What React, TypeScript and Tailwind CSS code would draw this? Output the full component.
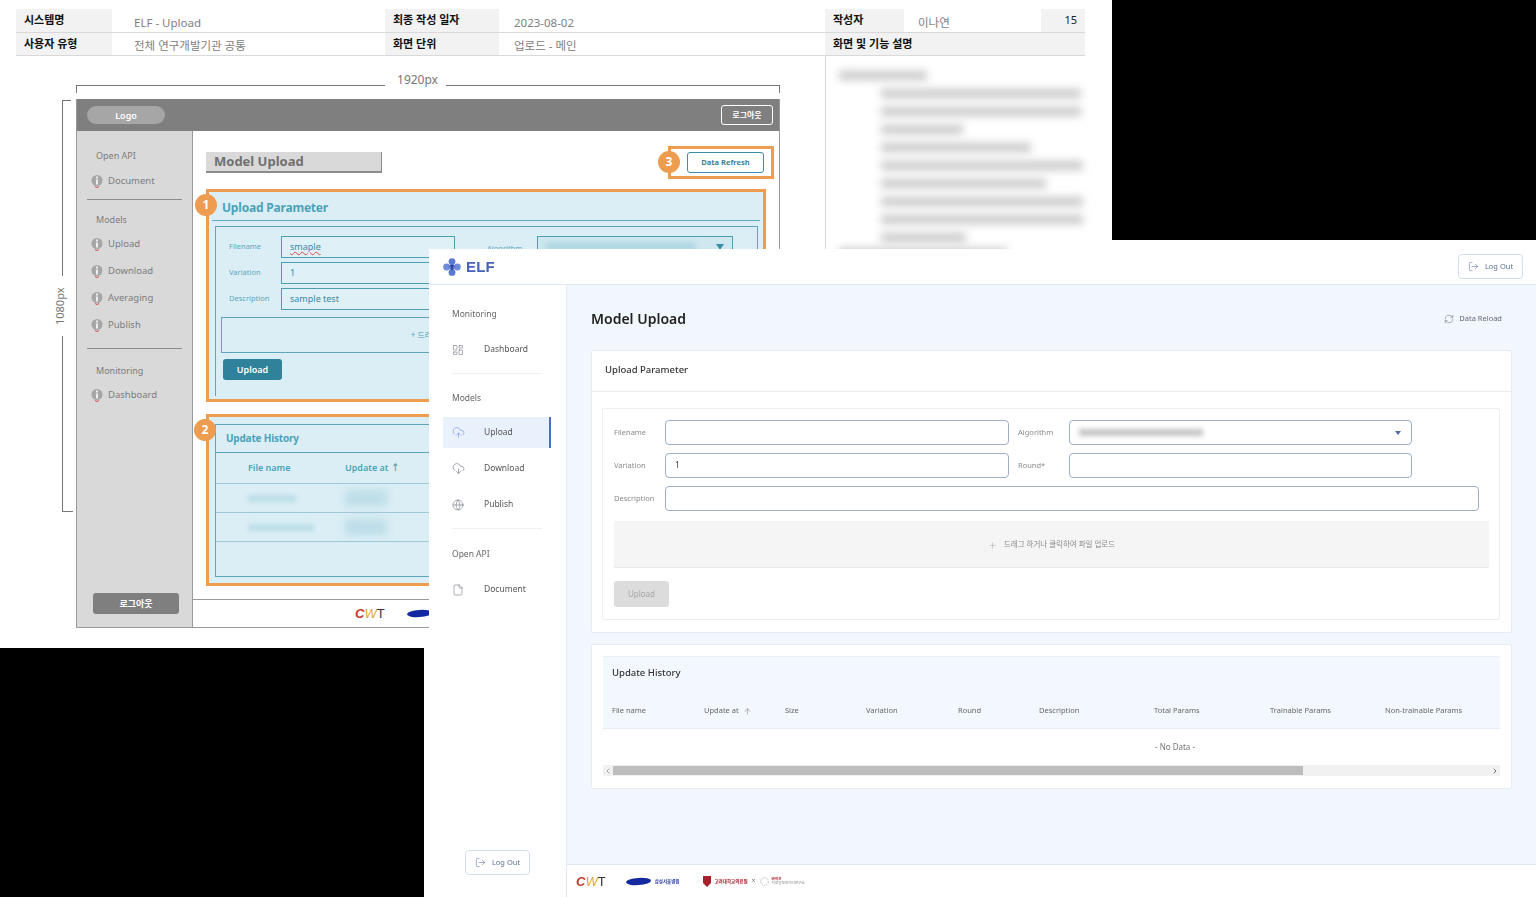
import React from "react";
import {
  ArrowUp,
  ChevronLeft,
  ChevronRight,
  CloudDownload,
  CloudUpload,
  File,
  Globe,
  LayoutDashboard,
  LogOut,
  Plus,
  RefreshCw,
} from "lucide-react";

const font = "font-['Noto_Sans','Noto_Sans_CJK_KR',sans-serif]";

// ---------- spec sheet (back window) ----------

const SpecLabel = ({ w, children }: { w: string; children: React.ReactNode }) => (
  <div className={`${w} shrink-0 bg-[#f2f2f2] pl-2 text-[11px] font-bold text-[#111] flex items-center`}>
    {children}
  </div>
);

const SpecValue = ({ w, pl, children }: { w: string; pl: string; children?: React.ReactNode }) => (
  <div className={`${w} ${pl} shrink-0 pt-[4px] text-[11.5px] text-[#808080] flex items-center`}>
    {children}
  </div>
);

const WireInfo = () => (
  <svg width="12" height="15" viewBox="0 0 12 15" className="shrink-0">
    <circle cx="6" cy="6.5" r="5.5" fill="#a6a6a6" />
    <rect x="5" y="2.5" width="2" height="2" fill="#eee" />
    <rect x="5" y="5.5" width="2" height="5" fill="#eee" />
    <path d="M4 12.5 Q6 14.5 8 12.5" stroke="#d24a4a" strokeWidth="1" fill="none" />
  </svg>
);

const WireItem = ({ label, h }: { label: string; h: string }) => (
  <div className={`${h} flex items-center gap-[5px] pl-[14px] text-[9.5px] text-[#7c7c7c]`}>
    <WireInfo />
    {label}
  </div>
);

const WireSection = ({ label }: { label: string }) => (
  <div className="h-[14px] pl-[19px] text-[9px] leading-[14px] text-[#7c7c7c]">{label}</div>
);

const WireField = ({
  label,
  value,
  squiggle,
  children,
}: {
  label: string;
  value: string;
  squiggle?: boolean;
  children?: React.ReactNode;
}) => (
  <div className="flex h-[22px] items-center">
    <div className="w-[65px] shrink-0 pl-[13px] text-[7.5px] text-[#5aa6bd]">{label}</div>
    <div className="flex h-full w-[174px] shrink-0 items-center border border-[#4d9db3] bg-[#dff0f6] pl-2 text-[9px] text-[#3a8aa5]">
      {squiggle ? <span className="underline decoration-wavy decoration-[#d24a4a]">{value}</span> : value}
    </div>
    {children}
  </div>
);

const Badge = ({ n, className }: { n: number; className: string }) => (
  <div
    className={`absolute flex size-[22px] items-center justify-center rounded-full bg-[#ed9c50] text-[12px] font-bold text-white ${className}`}
  >
    {n}
  </div>
);

const blurLines = [
  "w-[200px]",
  "w-[200px]",
  "w-[82px]",
  "w-[150px]",
  "w-[202px]",
  "w-[165px]",
  "w-[202px]",
  "w-[202px]",
  "w-[85px]",
];

const BackWindow = () => (
  <div className="absolute left-0 top-0 flex h-[648px] w-[1112px] flex-col bg-white pl-4 pt-[9px]">
    <div className="flex h-[24px] w-[1069px] border-b border-[#d9d9d9]">
      <SpecLabel w="w-[96px]">시스템명</SpecLabel>
      <SpecValue w="w-[273px]" pl="pl-[22px]">ELF - Upload</SpecValue>
      <SpecLabel w="w-[114px]">최종 작성 일자</SpecLabel>
      <SpecValue w="w-[326px]" pl="pl-[15px]">2023-08-02</SpecValue>
      <SpecLabel w="w-[79px]">작성자</SpecLabel>
      <SpecValue w="w-[137px]" pl="pl-[14px]">이나연</SpecValue>
      <div className="flex flex-1 items-center justify-end bg-[#f2f2f2] pr-2 text-[11px] text-[#222]">15</div>
    </div>
    <div className="flex h-[23px] w-[1069px] border-b border-[#d9d9d9]">
      <SpecLabel w="w-[96px]">사용자 유형</SpecLabel>
      <SpecValue w="w-[273px]" pl="pl-[22px]">전체 연구개발기관 공통</SpecValue>
      <SpecLabel w="w-[114px]">화면 단위</SpecLabel>
      <SpecValue w="w-[326px]" pl="pl-[15px]">업로드 - 메인</SpecValue>
      <SpecLabel w="w-[260px]">화면 및 기능 설명</SpecLabel>
    </div>

    <div className="flex flex-1">
      {/* wireframe column */}
      <div className="relative w-[809px] shrink-0 pl-[60px] pt-[43px]">
        {/* dimension lines */}
        <div className="absolute left-[60px] top-[29px] flex h-[8px] w-[704px] items-start">
          <div className="h-full w-[309px] border-l border-t border-[#777]" />
          <div className="-mt-[14px] w-[61px] pl-[4px] text-center text-[12px] text-[#777]">1920px</div>
          <div className="h-full flex-1 border-r border-t border-[#777]" />
        </div>
        <div className="absolute left-[42px] top-[44px] flex h-[412px] w-[16px] flex-col items-start">
          <div className="ml-[4px] h-[176px] w-[9px] border-l border-t border-[#777]" />
          <div className="-ml-[2px] flex h-[60px] w-[8px] items-center justify-center">
            <span className="-rotate-90 whitespace-nowrap text-[11px] text-[#777]">1080px</span>
          </div>
          <div className="ml-[4px] w-[11px] flex-1 border-b border-l border-[#777]" />
        </div>

        <div className="flex h-[529px] w-[704px] flex-col border-b border-l border-r border-[#9a9a9a]">
          <div className="flex h-[32px] shrink-0 items-center justify-between bg-[#7f7f7f] pl-[10px] pr-[6px]">
            <div className="flex h-[18px] w-[78px] items-center justify-center rounded-full bg-[#a6a6a6] pt-[1px] text-[9px] font-semibold text-white">
              Logo
            </div>
            <div className="flex h-[20px] w-[52px] items-center justify-center rounded-[3px] border border-white text-[8px] font-semibold text-white">
              로그아웃
            </div>
          </div>
          <div className="flex min-h-0 flex-1">
            <div className="flex w-[116px] shrink-0 flex-col border-r border-[#9a9a9a] bg-[#d9d9d9] pt-[18px]">
              <WireSection label="Open API" />
              <div className="mt-[5px]" />
              <WireItem label="Document" h="h-[26px]" />
              <div className="mx-[10px] mt-[5px] border-t border-[#8c8c8c]" />
              <div className="mt-[13px]" />
              <WireSection label="Models" />
              <div className="mt-[4px]" />
              <WireItem label="Upload" h="h-[27px]" />
              <WireItem label="Download" h="h-[27px]" />
              <WireItem label="Averaging" h="h-[27px]" />
              <WireItem label="Publish" h="h-[27px]" />
              <div className="mx-[10px] mt-[9px] border-t border-[#8c8c8c]" />
              <div className="mt-[15px]" />
              <WireSection label="Monitoring" />
              <div className="mt-[4px]" />
              <WireItem label="Dashboard" h="h-[26px]" />
              <div className="mb-[13px] ml-[16px] mr-[13px] mt-auto flex h-[21px] items-center justify-center rounded-[3px] bg-[#7f7f7f] text-[9px] font-semibold text-white">
                로그아웃
              </div>
            </div>
            <div className="flex min-w-0 flex-1 flex-col">
              <div className="relative min-h-0 flex-1 pl-[13px] pt-[21px]">
                <div className="flex h-[21px] w-[176px] items-center border-b-2 border-r border-[#8c8c8c] bg-[#d9d9d9] pl-2 text-[13px] font-bold text-[#707070]">
                  Model Upload
                </div>
                {/* data refresh callout */}
                <div className="absolute right-[5px] top-[15px] flex h-[33px] w-[106px] items-center justify-end border-[3px] border-[#ed9c50] pr-[7px]">
                  <div className="flex h-[21px] w-[77px] items-center justify-center rounded-[3px] border border-[#3d8da5] text-[7.5px] font-bold text-[#3d7f96]">
                    Data Refresh
                  </div>
                </div>
                <Badge n={3} className="right-[99px] top-[20px]" />

                {/* upload parameter */}
                <div className="relative mt-[16px] h-[213px] w-[560px] border-[3px] border-[#ed9c50] bg-[#dbeef5] px-[3px] pt-[4px]">
                  <div className="h-[25px] border-b border-[#5fb0c4] pl-[10px] text-[12px] font-bold leading-[24px] tracking-[-0.2px] text-[#4aa3b8]">
                    Upload Parameter
                  </div>
                  <div className="ml-[3px] mr-[2px] mt-[5px] h-[170px] border-l border-r border-t border-[#5fa5ba] pt-[9px]">
                    <div className="flex flex-col gap-[4px]">
                      <WireField label="Filename" value="smaple" squiggle>
                        <div className="w-[32px] shrink-0" />
                        <div className="w-[50px] shrink-0 pt-[4px] text-[7.5px] text-[#5aa6bd]">Algorithm</div>
                        <div className="flex h-full w-[196px] shrink-0 items-center justify-between overflow-hidden border border-[#4d9db3] bg-[#cfe8f0] px-[8px]">
                          <div className="h-[8px] w-[150px] bg-[#a9d3e0] blur-[3px]" />
                          <div className="size-0 border-x-[4px] border-t-[6px] border-x-transparent border-t-[#3d8da5]" />
                        </div>
                      </WireField>
                      <WireField label="Variation" value="1" />
                      <WireField label="Description" value="sample test" />
                    </div>
                    <div className="ml-[5px] mr-[3px] mt-[7px] flex h-[36px] items-center justify-center border border-[#5fa5ba] pr-[28px] text-[8px] text-[#4aa3b8]">
                      + 드래그 하거나 클릭하여 파일 업로드
                    </div>
                    <div className="ml-[7px] mt-[6px] flex h-[21px] w-[59px] items-center justify-center rounded-[3px] bg-[#2f8299] text-[9px] font-semibold text-white">
                      Upload
                    </div>
                  </div>
                </div>
                <Badge n={1} className="left-[2px] top-[63px]" />

                {/* update history */}
                <div className="relative mt-[12px] h-[172px] w-[560px] border-[3px] border-[#ed9c50] bg-[#dbeef5] pl-[6px] pt-[7px]">
                  <div className="h-[153px] border-b border-l border-t border-[#5fa5ba]">
                    <div className="h-[28px] border-b border-[#5fa5ba] pl-[10px] text-[10px] font-bold leading-[27px] tracking-[-0.2px] text-[#4aa3b8]">
                      Update History
                    </div>
                    <div className="flex h-[31px] items-center border-b border-[#9cc9d6] pl-[32px] text-[9px] font-semibold text-[#4aa3b8]">
                      <div className="w-[97px]">File name</div>
                      <div>Update at ↑</div>
                    </div>
                    <div className="flex h-[29px] items-center border-b border-[#9cc9d6] pl-[32px]">
                      <div className="w-[97px]">
                        <div className="h-[7px] w-[48px] bg-[#bcdde8] blur-[2px]" />
                      </div>
                      <div className="h-[16px] w-[42px] bg-[#bcdde8] blur-[4px]" />
                    </div>
                    <div className="flex h-[29px] items-center border-b border-[#9cc9d6] pl-[32px]">
                      <div className="w-[97px]">
                        <div className="h-[7px] w-[66px] bg-[#bcdde8] blur-[2px]" />
                      </div>
                      <div className="h-[16px] w-[42px] bg-[#bcdde8] blur-[4px]" />
                    </div>
                  </div>
                </div>
                <Badge n={2} className="left-[1px] top-[288px]" />
              </div>
              <div className="flex h-[28px] shrink-0 items-center gap-[22px] border-t border-[#9a9a9a] pl-[162px]">
                <CwtMark />
                <SamsungMark />
              </div>
            </div>
          </div>
        </div>
      </div>

      {/* blurred description */}
      <div className="flex-1 border-l border-[#d9d9d9] pl-[13px] pt-[15px]">
        <div className="h-[9px] w-[88px] bg-[#c8c8c8] blur-[4px]" />
        <div className="ml-[42px] mt-[9px] flex flex-col gap-[9px]">
          {blurLines.map((w, i) => (
            <div key={i} className={`h-[9px] ${w} bg-[#c8c8c8] blur-[4px]`} />
          ))}
        </div>
        <div className="mt-[6px] h-[9px] w-[168px] bg-[#c8c8c8] blur-[4px]" />
      </div>
    </div>
  </div>
);

// ---------- logos ----------

const CwtMark = () => (
  <span className="font-['Liberation_Sans',sans-serif] text-[13px] italic leading-none">
    <span className="font-bold text-[#c0392b]">C</span>
    <span className="text-[#e0a92e]">W</span>
    <span className="not-italic text-[#333]">T</span>
  </span>
);

const SamsungMark = () => (
  <svg width="25" height="9" viewBox="0 0 25 9">
    <ellipse cx="12.5" cy="4.5" rx="12.5" ry="3.6" transform="rotate(-4 12.5 4.5)" fill="#1428a0" />
  </svg>
);

const ElfLogo = () => (
  <div className="flex items-center gap-[5px]">
    <svg width="18" height="18" viewBox="0 0 18 18">
      <circle cx="9" cy="3.6" r="3.4" fill="#5b78d2" />
      <circle cx="9" cy="14.4" r="3.4" fill="#5b78d2" />
      <circle cx="3.6" cy="9" r="3.4" fill="#6f8bdc" />
      <circle cx="14.4" cy="9" r="3.4" fill="#6f8bdc" />
      <path d="M5 9 L9 5 L13 9 L9 13 Z" fill="#5b78d2" />
      <path d="M6.5 7 H11.5 L9 9.5 Z M8.2 9 H9.8 V12 H8.2 Z" fill="#2b3c92" />
    </svg>
    <span className="font-['Liberation_Sans',sans-serif] text-[15px] font-bold leading-none tracking-[0.2px] text-[#4a62b8]">
      ELF
    </span>
  </div>
);

// ---------- front window ----------

const SideLabel = ({ children }: { children: React.ReactNode }) => (
  <div className="flex h-5 items-center pl-[9px] text-[8.5px] text-[#666]">{children}</div>
);

const SideItem = ({
  icon,
  label,
  active,
}: {
  icon: React.ReactNode;
  label: string;
  active?: boolean;
}) => (
  <div
    className={`flex h-[31px] items-center pl-[9px] text-[8.5px] text-[#555] ${
      active ? "border-r-2 border-[#4a6fc9] bg-[#e9f1fc]" : ""
    }`}
  >
    <div className={`w-[32px] shrink-0 ${active ? "text-[#5b86d6]" : "text-[#5a5f68]"}`}>{icon}</div>
    {label}
  </div>
);

const LogOutButton = ({ className }: { className: string }) => (
  <div
    className={`flex h-[25px] w-[65px] items-center justify-center gap-[6px] rounded-[4px] border border-[#d5deeb] bg-white text-[7.5px] text-[#5d7299] ${className}`}
  >
    <LogOut size={11} strokeWidth={1.25} />
    Log Out
  </div>
);

const FieldLabel = ({ children }: { children: React.ReactNode }) => (
  <div className="flex w-[51px] shrink-0 items-center text-[7.5px] text-[#8a8a8a]">{children}</div>
);

const Input = ({ w, children }: { w: string; children?: React.ReactNode }) => (
  <div
    className={`flex h-[25px] ${w} shrink-0 items-center rounded-[4px] border border-[#9fb0c8] bg-white px-[9px] text-[8.5px] text-[#444]`}
  >
    {children}
  </div>
);

const columns = [
  { w: "w-[92px]", label: "File name" },
  { w: "w-[81px]", label: "Update at" },
  { w: "w-[81px]", label: "Size" },
  { w: "w-[92px]", label: "Variation" },
  { w: "w-[81px]", label: "Round" },
  { w: "w-[115px]", label: "Description" },
  { w: "w-[116px]", label: "Total Params" },
  { w: "w-[115px]", label: "Trainable Params" },
  { w: "w-[115px]", label: "Non-trainable Params" },
];

const FrontWindow = () => (
  <div className="absolute left-[429px] top-[249px] flex h-[648px] w-[1107px] flex-col bg-white">
    <header className="flex h-[36px] shrink-0 items-center justify-between border-b border-[#dde6f2] pl-[14px] pr-[13px]">
      <ElfLogo />
      <LogOutButton className="" />
    </header>
    <div className="flex min-h-0 flex-1">
      <aside className="flex w-[138px] shrink-0 flex-col border-r border-[#e3eaf3] pl-[14px] pr-[15px] pt-[19px]">
        <SideLabel>Monitoring</SideLabel>
        <div className="mt-[10px]" />
        <SideItem icon={<LayoutDashboard size={12} strokeWidth={1} />} label="Dashboard" />
        <div className="mx-[9px] mb-[14px] mt-[8px] border-t border-[#f0f0f0]" />
        <SideLabel>Models</SideLabel>
        <div className="mt-[9px] flex flex-col gap-[5px]">
          <SideItem icon={<CloudUpload size={13} strokeWidth={1} />} label="Upload" active />
          <SideItem icon={<CloudDownload size={13} strokeWidth={1} />} label="Download" />
          <SideItem icon={<Globe size={12} strokeWidth={1} />} label="Publish" />
        </div>
        <div className="mx-[9px] mb-[15px] mt-[8px] border-t border-[#f0f0f0]" />
        <SideLabel>Open API</SideLabel>
        <div className="mt-[10px]" />
        <SideItem icon={<File size={12} strokeWidth={1} />} label="Document" />
        <LogOutButton className="mb-[22px] ml-[22px] mt-auto" />
      </aside>
      <div className="flex min-w-0 flex-1 flex-col">
        <main className="min-h-0 flex-1 bg-[#f2f7fd] px-[24px] pt-[24px]">
          <div className="flex h-[20px] items-center justify-between pr-[10px]">
            <h1 className="pb-[2px] text-[14px] font-semibold text-[#222]">Model Upload</h1>
            <div className="flex items-center gap-[5px] text-[7.5px] text-[#667]">
              <RefreshCw size={10} strokeWidth={1.25} />
              Data Reload
            </div>
          </div>

          <section className="mt-[21px] h-[283px] rounded-[2px] border border-[#e6ecf4] bg-white">
            <div className="flex h-[41px] items-center border-b border-[#ececec] pb-[2px] pl-[13px] text-[9.5px] font-medium text-[#333]">
              Upload Parameter
            </div>
            <div className="ml-[10px] mr-[11px] mt-[16px] h-[212px] rounded-[2px] border border-[#eeeeee] pl-[11px] pt-[11px]">
              <div className="flex flex-col gap-[8px]">
                <div className="flex">
                  <FieldLabel>Filename</FieldLabel>
                  <Input w="w-[344px]" />
                  <div className="w-[9px]" />
                  <FieldLabel>Algorithm</FieldLabel>
                  <Input w="w-[343px] justify-between">
                    <div className="h-[7px] w-[124px] bg-[#c4c4c4] blur-[2.5px]" />
                    <div className="mr-[1px] size-0 border-x-[3px] border-t-[4px] border-x-transparent border-t-[#4a6fa8]" />
                  </Input>
                </div>
                <div className="flex">
                  <FieldLabel>Variation</FieldLabel>
                  <Input w="w-[344px]">1</Input>
                  <div className="w-[9px]" />
                  <FieldLabel>Round*</FieldLabel>
                  <Input w="w-[343px]" />
                </div>
                <div className="flex">
                  <FieldLabel>Description</FieldLabel>
                  <Input w="w-[814px]" />
                </div>
              </div>
              <div className="mt-[10px] flex h-[47px] w-[875px] items-center justify-center gap-[7px] border-b border-[#eaeaea] bg-[#f5f5f5] pt-[2px] text-[7.5px] text-[#8a8a8a]">
                <Plus size={9} strokeWidth={1} />
                드래그 하거나 클릭하여 파일 업로드
              </div>
              <div className="mt-[13px] flex h-[26px] w-[55px] items-center justify-center rounded-[3px] bg-[#dcdcdc] text-[8px] text-[#a8a8a8]">
                Upload
              </div>
            </div>
          </section>

          <section className="mt-[11px] h-[145px] rounded-[2px] border border-[#e6ecf4] bg-white pl-[11px] pr-[11px] pt-[11px]">
            <div className="h-[121px] overflow-hidden border-t border-[#eaf0f7]">
              <div className="h-[71px] bg-[#f3f8fe] pl-[9px] pt-[6px]">
                <div className="flex h-[20px] items-center text-[9.5px] font-medium text-[#333]">Update History</div>
                <div className="mt-[18px] flex h-[20px] items-center text-[7.5px] text-[#666]">
                  {columns.map((c) => (
                    <div key={c.label} className={`${c.w} flex shrink-0 items-center gap-[4px]`}>
                      {c.label}
                      {c.label === "Update at" && <ArrowUp size={9} strokeWidth={1.25} />}
                    </div>
                  ))}
                </div>
              </div>
              <div className="flex h-[37px] w-[1144px] items-center justify-center border-t border-[#e6ecf4] text-[8px] text-[#777]">
                - No Data -
              </div>
              <div className="flex h-[11px] items-center bg-[#f1f1f1] text-[#555]">
                <ChevronLeft size={8} strokeWidth={1.5} className="w-[10px] shrink-0" />
                <div className="h-[9px] w-[690px] bg-[#bdbdbd]" />
                <div className="flex-1" />
                <ChevronRight size={8} strokeWidth={2.5} className="w-[10px] shrink-0" />
              </div>
            </div>
          </section>
        </main>
        <footer className="flex h-[33px] shrink-0 items-center border-t border-[#dde6f2] pl-[9px]">
          <CwtMark />
          <div className="ml-[20px] flex items-center gap-[4px]">
            <SamsungMark />
            <span className="text-[4.5px] font-semibold text-[#2b3f9e]">삼성서울병원</span>
          </div>
          <div className="ml-[24px] flex items-center gap-[3px]">
            <svg width="8" height="11" viewBox="0 0 8 11">
              <path d="M0 0 H8 V7 L4 11 L0 7 Z" fill="#a8202c" />
            </svg>
            <span className="text-[4.5px] font-semibold text-[#a8202c]">고려대학교의료원</span>
            <span className="px-[1px] text-[7px] text-[#777]">×</span>
            <svg width="9" height="9" viewBox="0 0 9 9">
              <circle cx="4.5" cy="4.5" r="3.8" fill="none" stroke="#bbb" strokeWidth="1" strokeDasharray="1.5 1" />
            </svg>
            <span className="text-[3.6px] leading-[4.5px] text-[#888]">
              <span className="block font-semibold text-[#a8202c]">바이오</span>
              의료정보데이터연구원
            </span>
          </div>
        </footer>
      </div>
    </div>
  </div>
);

export default function App() {
  return (
    <div className={`relative h-[897px] w-[1536px] overflow-hidden bg-black ${font}`}>
      <div className="absolute left-[424px] top-[240px] h-[657px] w-[1112px] bg-white" />
      <div className="blur-[0.5px]">
        <BackWindow />
        <FrontWindow />
      </div>
    </div>
  );
}
